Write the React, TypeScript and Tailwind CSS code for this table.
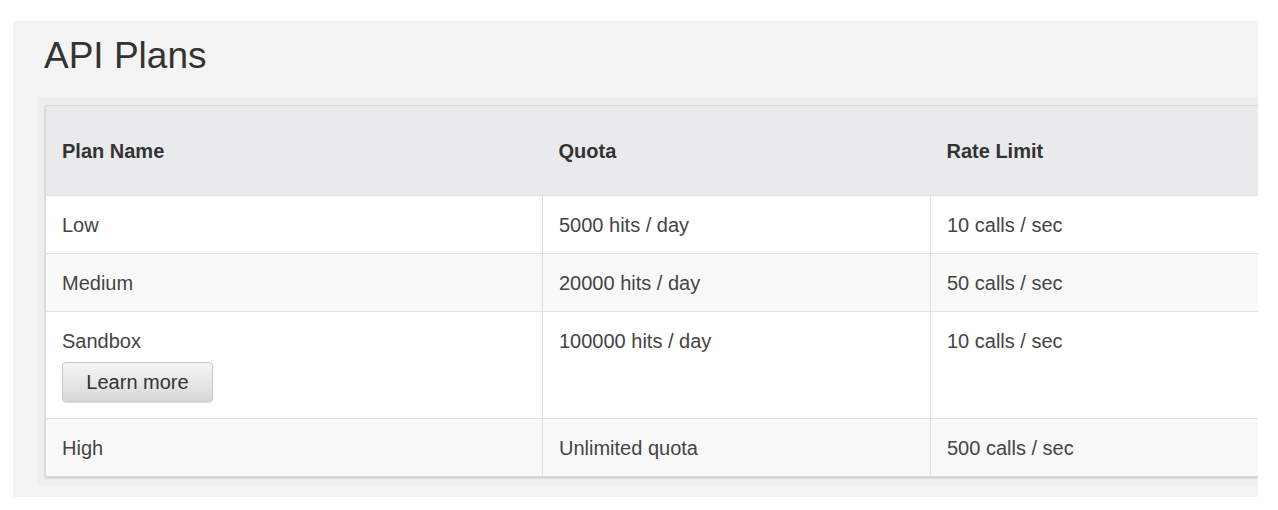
import React from "react";

interface Plan {
  name: string;
  quota: string;
  rate: string;
  learnMore?: boolean;
}

const plans: Plan[] = [
  { name: "Low", quota: "5000 hits / day", rate: "10 calls / sec" },
  { name: "Medium", quota: "20000 hits / day", rate: "50 calls / sec" },
  { name: "Sandbox", quota: "100000 hits / day", rate: "10 calls / sec", learnMore: true },
  { name: "High", quota: "Unlimited quota", rate: "500 calls / sec" },
];

export default function App() {
  return (
    <div
      className="w-[1278px] h-[510px] bg-white pt-[21px] pl-[13px] overflow-hidden"
      style={{ fontFamily: '"Liberation Sans", Arial, sans-serif' }}
    >
      <div className="w-[1245px] h-[476px] bg-[#f4f4f4] pt-[13px] pl-[24px] overflow-hidden">
        {/* Title */}
        <h1 className="pl-[7px] text-[37px] leading-[44px] text-[#333]">API Plans</h1>

        {/* Table wrapper */}
        <div className="mt-[19px] w-[1300px] bg-[#efefef] pt-2 pl-2 pb-[9px]">
          <table className="w-[1280px] border-collapse bg-white text-[20px] leading-6 text-[#444] shadow-[0_1px_2px_rgba(0,0,0,0.18)] border border-[#d9d9d9]">
            <thead>
              <tr className="h-[90px] bg-[#e9eaeb] text-left text-[#333]">
                <th className="w-[497px] pl-4 pr-4 font-bold">Plan Name</th>
                <th className="w-[388px] pl-4 pr-4 font-bold">Quota</th>
                <th className="pl-4 pr-4 font-bold">Rate Limit</th>
              </tr>
            </thead>
            <tbody>
              {plans.map((plan, i) => (
                <tr
                  key={plan.name}
                  className={`align-top border-t border-[#e3e3e3] ${i % 2 === 1 ? "bg-[#f9f9f9]" : "bg-white"}`}
                >
                  <td className="pl-4 pr-4 pt-[17px] pb-4">
                    <div>{plan.name}</div>
                    {plan.learnMore && (
                      <button className="mt-[9px] h-10 w-[151px] rounded-[4px] border border-[#c9c9c9] bg-gradient-to-b from-[#f6f6f6] to-[#d9d9d9] text-[20px] text-[#333] shadow-[0_1px_1px_rgba(0,0,0,0.12)]">
                        Learn more
                      </button>
                    )}
                  </td>
                  <td className="pl-4 pr-4 pt-[17px] pb-4 border-l border-[#dedede]">{plan.quota}</td>
                  <td className="pl-4 pr-4 pt-[17px] pb-4 border-l border-[#dedede]">{plan.rate}</td>
                </tr>
              ))}
            </tbody>
          </table>
        </div>
      </div>
    </div>
  );
}
